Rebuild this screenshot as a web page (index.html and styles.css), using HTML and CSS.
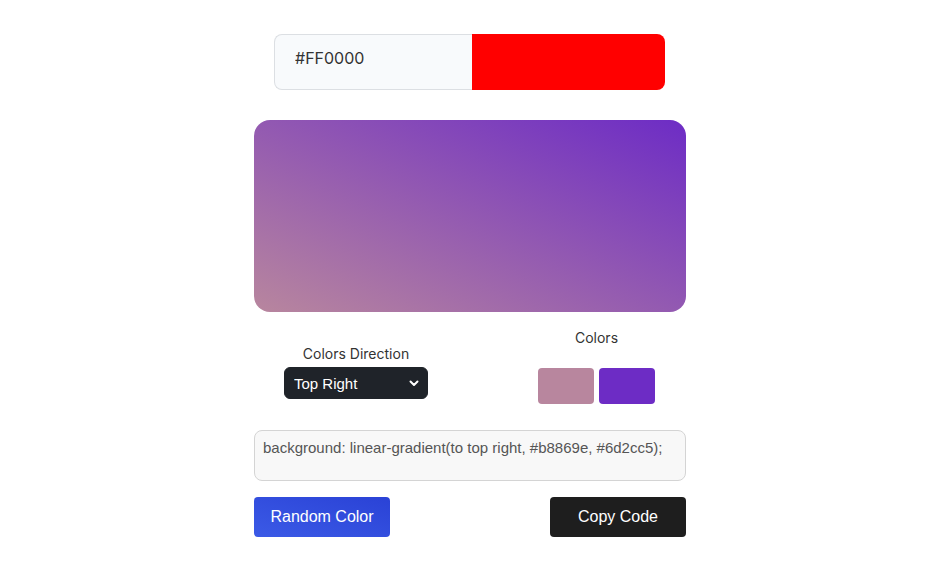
FILE: index.html
```html
<!DOCTYPE html>
<html lang="en">
<head>
    <meta charset="UTF-8">
    <meta name="viewport" content="width=device-width, initial-scale=1.0">
    <title>Gradient Generator</title>
    <link rel="stylesheet" href="styles.css">
</head>
<body>

<div class="wrapper">
    <div class="picker">
        <input type="text" class="hex-input" value="#FF0000">
        <div class="hex-preview"></div>
    </div>

    <div class="gradient-box"></div>

    <div class="options">
        <div class="direction">
            <p>Colors Direction</p>
            <select class="select-box">
                <option>Top Right</option>
                <option>Top Left</option>
                <option>Bottom Right</option>
                <option>Bottom Left</option>
                <option>Top</option>
                <option>Bottom</option>
            </select>
        </div>
        <div class="colors">
            <p>Colors</p>
            <div class="swatches">
                <div class="swatch first"></div>
                <div class="swatch second"></div>
            </div>
        </div>
    </div>

    <textarea class="code" disabled>background: linear-gradient(to top right, #b8869e, #6d2cc5);</textarea>

    <div class="buttons">
        <button class="random">Random Color</button>
        <button class="copy">Copy Code</button>
    </div>
</div>

</body>
</html>
```

FILE: styles.css
```css
body {
    margin: 0;
    background: #fff;
    font-family: Inter, "Noto Sans", sans-serif;
    color: #333;
}
.wrapper {
    width: 432px;
    margin: 34px 0 0 calc(50% - 216.5px);
    display: flex;
    flex-direction: column;
}
.picker {
    display: flex;
    width: 391px;
    height: 56px;
    margin-left: 20px;
}
.hex-input {
    width: 198px;
    height: 56px;
    box-sizing: border-box;
    border: 1px solid #dcdfe3;
    border-right: none;
    border-radius: 8px 0 0 8px;
    background: #f8fafc;
    padding: 0 0 8px 20px;
    font-family: Inter, sans-serif;
    font-size: 16px;
    color: #333;
    outline: none;
}
.hex-preview {
    flex: 1;
    background: #ff0000;
    border-radius: 0 8px 8px 0;
}
.gradient-box {
    height: 192px;
    margin-top: 30px;
    border-radius: 16px;
    background: linear-gradient(to top right, #b8869e, #6d2cc5);
}
.options {
    display: flex;
    justify-content: space-between;
    align-items: flex-start;
    padding: 0 31px 0 30px;
    margin-top: 17px;
}
.options p {
    margin: 0;
    font-size: 14px;
    line-height: 17px;
    color: #333;
    text-align: center;
}
.direction {
    display: flex;
    flex-direction: column;
    align-items: center;
    gap: 5px;
    margin-top: 16px;
}
.select-box {
    -webkit-appearance: none;
    appearance: none;
    width: 144px;
    height: 32px;
    border: 1px solid #1f2329;
    border-radius: 6px;
    background: #1f2329 url("data:image/svg+xml,%3Csvg xmlns='http://www.w3.org/2000/svg' width='10' height='7' viewBox='0 0 10 7'%3E%3Cpath d='M1.5 1.5 5 5 8.5 1.5' fill='none' stroke='white' stroke-width='2' stroke-linecap='round' stroke-linejoin='round'/%3E%3C/svg%3E") no-repeat right 8px center;
    color: #fff;
    font-family: "Liberation Sans", Arial, sans-serif;
    font-size: 15px;
    padding: 0 4px 0 9px;
    outline: none;
}
.colors {
    display: flex;
    flex-direction: column;
    align-items: center;
    gap: 22px;
}
.swatches {
    display: flex;
    gap: 5px;
}
.swatch {
    width: 56px;
    height: 36px;
    border-radius: 4px;
}
.swatch.first {
    background: #b8869e;
}
.swatch.second {
    background: #6d2cc5;
}
.code {
    height: 51px;
    margin-top: 26px;
    box-sizing: border-box;
    border: 1px solid #d4d4d4;
    border-radius: 8px;
    background: #f8f8f8;
    padding: 8px;
    resize: none;
    font-family: "Liberation Sans", Arial, sans-serif;
    font-size: 15px;
    color: #555;
}
.buttons {
    display: flex;
    justify-content: space-between;
    margin-top: 16px;
}
.buttons button {
    width: 136px;
    height: 40px;
    border: none;
    border-radius: 4px;
    font-family: "Liberation Sans", Arial, sans-serif;
    font-size: 16px;
    color: #fff;
    cursor: pointer;
}
.buttons .random {
    background: linear-gradient(to top right, #3b5ae6, #2a42d6);
}
.buttons .copy {
    background: #1e1e1e;
}
```
